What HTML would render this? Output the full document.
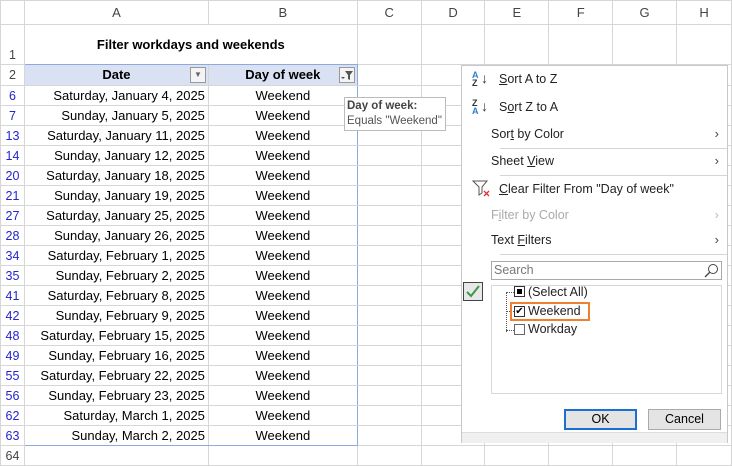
<!DOCTYPE html>
<html><head><meta charset="utf-8"><style>
*{margin:0;padding:0;box-sizing:border-box}
body{width:732px;height:465px;overflow:hidden;background:#fff;font-family:"Liberation Sans",sans-serif;font-size:12.5px;color:#000;position:relative}
table{border-collapse:collapse;table-layout:fixed;position:absolute;left:0;top:0}
td{border:1px solid #d6d6d6;height:20px;padding:0 3px;white-space:nowrap;overflow:hidden;line-height:18px}
tr.h td{height:24px;text-align:center;color:#444;border-color:#d6d6d6;background:#fff;font-size:13px}
td.rn{text-align:center;color:#2323d0;font-size:12.5px;padding:0}
td.rg{color:#444}
td.a{text-align:right;font-size:13px}
td.b{text-align:center;font-size:13px}
.menu{position:absolute;left:461px;top:65px;width:267px;height:378px;background:#fff;border:1px solid #c8c8c8;font-size:12.5px}
.it{position:absolute;left:29px;color:#222}
.ar{position:absolute;right:8px;color:#444;font-size:13px}
.sep{position:absolute;left:38px;right:0;border-top:1px solid #d4d4d4}
u{text-decoration:underline}
</style></head><body>
<table>
<colgroup><col style="width:24px"><col style="width:184px"><col style="width:149px"><col style="width:64px"><col style="width:64px"><col style="width:64px"><col style="width:64px"><col style="width:64px"><col style="width:55px"></colgroup>
<tr class="h"><td style="background:#fff"></td><td>A</td><td>B</td><td>C</td><td>D</td><td>E</td><td>F</td><td>G</td><td>H</td></tr>
<tr><td class="rn rg" style="height:40px;vertical-align:bottom">1</td><td colspan="2" style="height:40px;text-align:center;font-weight:bold;font-size:13px;border-bottom:1px solid #8ea9db">Filter workdays and weekends</td><td></td><td></td><td></td><td></td><td></td><td></td></tr>
<tr><td class="rn rg" style="height:21px">2</td><td style="height:21px;background:#d9e1f2;text-align:center;font-weight:bold;font-size:13px;border-left:1px solid #8ea9db;position:relative">Date<span style="position:absolute;right:2px;top:2px;width:16px;height:16px;border:1px solid #999;background:#f4f4f4;font-size:8px;line-height:14px;color:#666">▼</span></td><td style="background:#d9e1f2;text-align:center;font-weight:bold;font-size:13px;border-right:1px solid #8ea9db;position:relative">Day of week<span style="position:absolute;right:2px;top:2px;width:16px;height:16px;border:1px solid #999;background:#f4f4f4"><svg width="14" height="14" style="position:absolute;left:0;top:0"><path d="M5 3h8l-3 4v5l-2-1V7z" fill="#555"/><path d="M1 9h4l-2 2z" fill="#555"/></svg></span></td><td></td><td></td><td></td><td></td><td></td><td></td></tr>
<tr><td class="rn">6</td><td class="a" style="border-left:1px solid #8ea9db">Saturday, January 4, 2025</td><td class="b" style="border-right:1px solid #8ea9db">Weekend</td><td></td><td></td><td></td><td></td><td></td><td></td></tr>
<tr><td class="rn">7</td><td class="a" style="border-left:1px solid #8ea9db">Sunday, January 5, 2025</td><td class="b" style="border-right:1px solid #8ea9db">Weekend</td><td></td><td></td><td></td><td></td><td></td><td></td></tr>
<tr><td class="rn">13</td><td class="a" style="border-left:1px solid #8ea9db">Saturday, January 11, 2025</td><td class="b" style="border-right:1px solid #8ea9db">Weekend</td><td></td><td></td><td></td><td></td><td></td><td></td></tr>
<tr><td class="rn">14</td><td class="a" style="border-left:1px solid #8ea9db">Sunday, January 12, 2025</td><td class="b" style="border-right:1px solid #8ea9db">Weekend</td><td></td><td></td><td></td><td></td><td></td><td></td></tr>
<tr><td class="rn">20</td><td class="a" style="border-left:1px solid #8ea9db">Saturday, January 18, 2025</td><td class="b" style="border-right:1px solid #8ea9db">Weekend</td><td></td><td></td><td></td><td></td><td></td><td></td></tr>
<tr><td class="rn">21</td><td class="a" style="border-left:1px solid #8ea9db">Sunday, January 19, 2025</td><td class="b" style="border-right:1px solid #8ea9db">Weekend</td><td></td><td></td><td></td><td></td><td></td><td></td></tr>
<tr><td class="rn">27</td><td class="a" style="border-left:1px solid #8ea9db">Saturday, January 25, 2025</td><td class="b" style="border-right:1px solid #8ea9db">Weekend</td><td></td><td></td><td></td><td></td><td></td><td></td></tr>
<tr><td class="rn">28</td><td class="a" style="border-left:1px solid #8ea9db">Sunday, January 26, 2025</td><td class="b" style="border-right:1px solid #8ea9db">Weekend</td><td></td><td></td><td></td><td></td><td></td><td></td></tr>
<tr><td class="rn">34</td><td class="a" style="border-left:1px solid #8ea9db">Saturday, February 1, 2025</td><td class="b" style="border-right:1px solid #8ea9db">Weekend</td><td></td><td></td><td></td><td></td><td></td><td></td></tr>
<tr><td class="rn">35</td><td class="a" style="border-left:1px solid #8ea9db">Sunday, February 2, 2025</td><td class="b" style="border-right:1px solid #8ea9db">Weekend</td><td></td><td></td><td></td><td></td><td></td><td></td></tr>
<tr><td class="rn">41</td><td class="a" style="border-left:1px solid #8ea9db">Saturday, February 8, 2025</td><td class="b" style="border-right:1px solid #8ea9db">Weekend</td><td></td><td></td><td></td><td></td><td></td><td></td></tr>
<tr><td class="rn">42</td><td class="a" style="border-left:1px solid #8ea9db">Sunday, February 9, 2025</td><td class="b" style="border-right:1px solid #8ea9db">Weekend</td><td></td><td></td><td></td><td></td><td></td><td></td></tr>
<tr><td class="rn">48</td><td class="a" style="border-left:1px solid #8ea9db">Saturday, February 15, 2025</td><td class="b" style="border-right:1px solid #8ea9db">Weekend</td><td></td><td></td><td></td><td></td><td></td><td></td></tr>
<tr><td class="rn">49</td><td class="a" style="border-left:1px solid #8ea9db">Sunday, February 16, 2025</td><td class="b" style="border-right:1px solid #8ea9db">Weekend</td><td></td><td></td><td></td><td></td><td></td><td></td></tr>
<tr><td class="rn">55</td><td class="a" style="border-left:1px solid #8ea9db">Saturday, February 22, 2025</td><td class="b" style="border-right:1px solid #8ea9db">Weekend</td><td></td><td></td><td></td><td></td><td></td><td></td></tr>
<tr><td class="rn">56</td><td class="a" style="border-left:1px solid #8ea9db">Sunday, February 23, 2025</td><td class="b" style="border-right:1px solid #8ea9db">Weekend</td><td></td><td></td><td></td><td></td><td></td><td></td></tr>
<tr><td class="rn">62</td><td class="a" style="border-left:1px solid #8ea9db">Saturday, March 1, 2025</td><td class="b" style="border-right:1px solid #8ea9db">Weekend</td><td></td><td></td><td></td><td></td><td></td><td></td></tr>
<tr><td class="rn">63</td><td class="a" style="border-left:1px solid #8ea9db;border-bottom:1px solid #8ea9db">Sunday, March 2, 2025</td><td class="b" style="border-right:1px solid #8ea9db;border-bottom:1px solid #8ea9db">Weekend</td><td></td><td></td><td></td><td></td><td></td><td></td></tr>
<tr><td class="rn rg">64</td><td></td><td></td><td></td><td></td><td></td><td></td><td></td><td></td></tr>
</table>

<div style="position:absolute;left:344px;top:97px;width:102px;height:34px;background:#fff;border:1px solid #bbb;font-size:11.5px;line-height:15px;padding:1px 2px;color:#555;white-space:nowrap;overflow:hidden"><b style="color:#444">Day of week:</b><br>Equals "Weekend"</div>

<div class="menu">
<div style="position:absolute;left:10px;top:5px;font-size:9px;line-height:8px;color:#2a7fd4;font-weight:bold">A<br><span style="color:#333">Z</span></div><div style="position:absolute;left:19px;top:4px;font-size:14px;color:#333">↓</div>
<div class="it" style="left:37px;top:6px"><u>S</u>ort A to Z</div>
<div style="position:absolute;left:10px;top:33px;font-size:9px;line-height:8px;color:#333;font-weight:bold">Z<br><span style="color:#2a7fd4">A</span></div><div style="position:absolute;left:19px;top:32px;font-size:14px;color:#333">↓</div>
<div class="it" style="left:37px;top:34px">S<u>o</u>rt Z to A</div>
<div class="it" style="top:61px">Sor<u>t</u> by Color</div><div class="ar" style="top:60px">›</div>
<div class="sep" style="top:82px"></div>
<div class="it" style="top:88px">Sheet <u>V</u>iew</div><div class="ar" style="top:87px">›</div>
<div class="sep" style="top:109px"></div>
<svg style="position:absolute;left:10px;top:113px" width="20" height="20"><path d="M1 2h14l-5 6v6l-3 2V8z" fill="none" stroke="#555"/><path d="M12 12l5 5M17 12l-5 5" stroke="#e03030" stroke-width="1.3"/></svg>
<div class="it" style="left:37px;top:116px"><u>C</u>lear Filter From "Day of week"</div>
<div class="it" style="top:142px;color:#aaa">F<u>i</u>lter by Color</div><div class="ar" style="top:141px;color:#bbb">›</div>
<div class="it" style="top:167px">Text <u>F</u>ilters</div><div class="ar" style="top:166px">›</div>
<div class="sep" style="top:188px"></div>
<div style="position:absolute;left:29px;top:195px;width:231px;height:19px;border:1px solid #aaa;color:#777;padding-left:2px;line-height:17px">Search<svg style="position:absolute;right:2px;top:1px" width="15" height="15"><circle cx="9" cy="6" r="4.5" fill="none" stroke="#444"/><path d="M6 9L1 14" stroke="#444" stroke-width="1.3"/></svg></div>
<div style="position:absolute;left:1px;top:216px;width:20px;height:19px;border:1px solid #444;background:#e8e8e8"><svg width="18" height="17"><path d="M3 9l4 4 8-10" fill="none" stroke="#3a9a4a" stroke-width="2"/></svg></div>
<div style="position:absolute;left:29px;top:219px;width:231px;height:109px;border:1px solid #d8d8d8"></div>
<div style="position:absolute;left:44px;top:226px;width:10px;height:40px;border-left:1px dotted #555"></div>
<div style="position:absolute;left:44px;top:226px;width:8px;border-top:1px dotted #555"></div>
<div style="position:absolute;left:44px;top:245px;width:8px;border-top:1px dotted #555"></div>
<div style="position:absolute;left:44px;top:264px;width:8px;border-top:1px dotted #555"></div>
<div style="position:absolute;left:52px;top:220px;width:11px;height:11px;border:1px solid #333;background:#fff"><div style="margin:2px;width:5px;height:5px;background:#000"></div></div>
<div class="it" style="left:66px;top:219px">(Select All)</div>
<div style="position:absolute;left:48px;top:236px;width:80px;height:19px;border:2px solid #f08030"></div>
<div style="position:absolute;left:52px;top:240px;width:11px;height:11px;border:1px solid #333;font-size:10px;line-height:9px;text-align:center">✔</div>
<div class="it" style="left:66px;top:238px">Weekend</div>
<div style="position:absolute;left:52px;top:258px;width:11px;height:11px;border:1px solid #666"></div>
<div class="it" style="left:66px;top:256px">Workday</div>
<div style="position:absolute;left:102px;top:343px;width:73px;height:21px;border:2px solid #1a6fd0;background:#e4e4e4;text-align:center;line-height:17px">OK</div>
<div style="position:absolute;left:186px;top:343px;width:73px;height:21px;border:1px solid #aaa;background:#e4e4e4;text-align:center;line-height:19px">Cancel</div>
<div style="position:absolute;left:0;right:0;top:366px;height:11px;background:#f0f0f0;border-top:1px solid #ddd"></div>
</div>
</body></html>
